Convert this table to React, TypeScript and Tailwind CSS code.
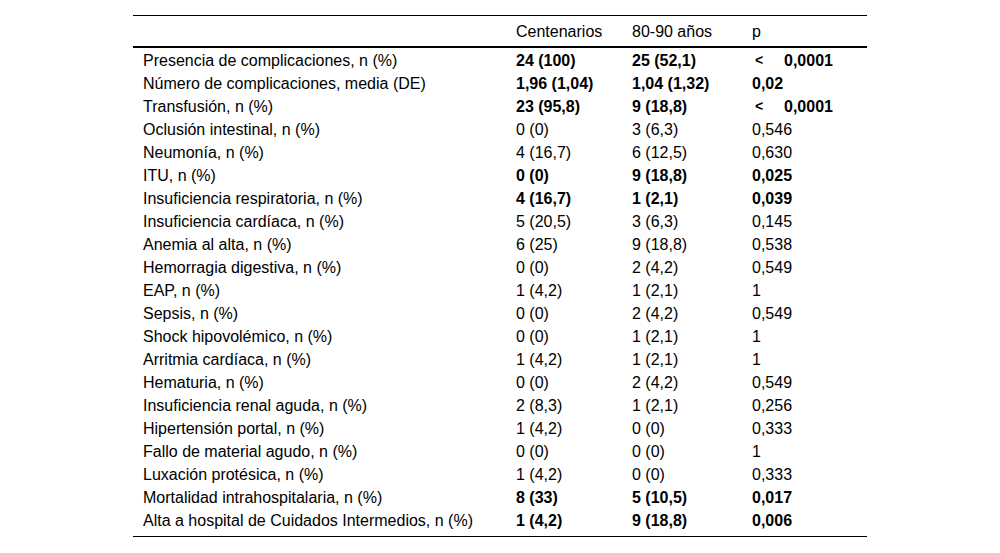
const rows: { label: string; c: string; o: string; p: string; bold?: boolean }[] = [
  { label: 'Presencia de complicaciones, n (%)', c: '24 (100)', o: '25 (52,1)', p: '<', bold: true },
  { label: 'Número de complicaciones, media (DE)', c: '1,96 (1,04)', o: '1,04 (1,32)', p: '0,02', bold: true },
  { label: 'Transfusión, n (%)', c: '23 (95,8)', o: '9 (18,8)', p: '<', bold: true },
  { label: 'Oclusión intestinal, n (%)', c: '0 (0)', o: '3 (6,3)', p: '0,546' },
  { label: 'Neumonía, n (%)', c: '4 (16,7)', o: '6 (12,5)', p: '0,630' },
  { label: 'ITU, n (%)', c: '0 (0)', o: '9 (18,8)', p: '0,025', bold: true },
  { label: 'Insuficiencia respiratoria, n (%)', c: '4 (16,7)', o: '1 (2,1)', p: '0,039', bold: true },
  { label: 'Insuficiencia cardíaca, n (%)', c: '5 (20,5)', o: '3 (6,3)', p: '0,145' },
  { label: 'Anemia al alta, n (%)', c: '6 (25)', o: '9 (18,8)', p: '0,538' },
  { label: 'Hemorragia digestiva, n (%)', c: '0 (0)', o: '2 (4,2)', p: '0,549' },
  { label: 'EAP, n (%)', c: '1 (4,2)', o: '1 (2,1)', p: '1' },
  { label: 'Sepsis, n (%)', c: '0 (0)', o: '2 (4,2)', p: '0,549' },
  { label: 'Shock hipovolémico, n (%)', c: '0 (0)', o: '1 (2,1)', p: '1' },
  { label: 'Arritmia cardíaca, n (%)', c: '1 (4,2)', o: '1 (2,1)', p: '1' },
  { label: 'Hematuria, n (%)', c: '0 (0)', o: '2 (4,2)', p: '0,549' },
  { label: 'Insuficiencia renal aguda, n (%)', c: '2 (8,3)', o: '1 (2,1)', p: '0,256' },
  { label: 'Hipertensión portal, n (%)', c: '1 (4,2)', o: '0 (0)', p: '0,333' },
  { label: 'Fallo de material agudo, n (%)', c: '0 (0)', o: '0 (0)', p: '1' },
  { label: 'Luxación protésica, n (%)', c: '1 (4,2)', o: '0 (0)', p: '0,333' },
  { label: 'Mortalidad intrahospitalaria, n (%)', c: '8 (33)', o: '5 (10,5)', p: '0,017', bold: true },
  { label: 'Alta a hospital de Cuidados Intermedios, n (%)', c: '1 (4,2)', o: '9 (18,8)', p: '0,006', bold: true },
];

const cols = 'grid grid-cols-[373px_116px_120px_125px]';

export default function App() {
  return (
    <div className="min-h-screen bg-white pt-[15px] font-['Liberation_Sans',Arial,sans-serif] text-[16px] text-black">
      <div className="mx-auto w-[734px] border-t border-b border-black pt-[2px] pb-[4px]">
        <div className={`${cols} h-[30px] items-center border-b-2 border-black leading-none`}>
          <div />
          <div className="pl-[10px]">Centenarios</div>
          <div className="pl-[10px]">80-90 años</div>
          <div className="pl-[10px]">p</div>
        </div>
        <div className="pt-[1px]">
          {rows.map(r => (
            <div key={r.label} className={`${cols} h-[23px] items-center leading-none`}>
              <div className="pl-[10px]">{r.label}</div>
              <div className={`pl-[10px] ${r.bold ? 'font-bold' : ''}`}>{r.c}</div>
              <div className={`pl-[10px] ${r.bold ? 'font-bold' : ''}`}>{r.o}</div>
              <div className={`pl-[10px] ${r.bold ? 'font-bold' : ''}`}>
                {r.p === '<' ? (
                  <span className="flex">
                    <span className="w-[32px] pl-[3px] text-[14px]">&lt;</span>
                    <span>0,0001</span>
                  </span>
                ) : (
                  r.p
                )}
              </div>
            </div>
          ))}
        </div>
      </div>
    </div>
  );
}
